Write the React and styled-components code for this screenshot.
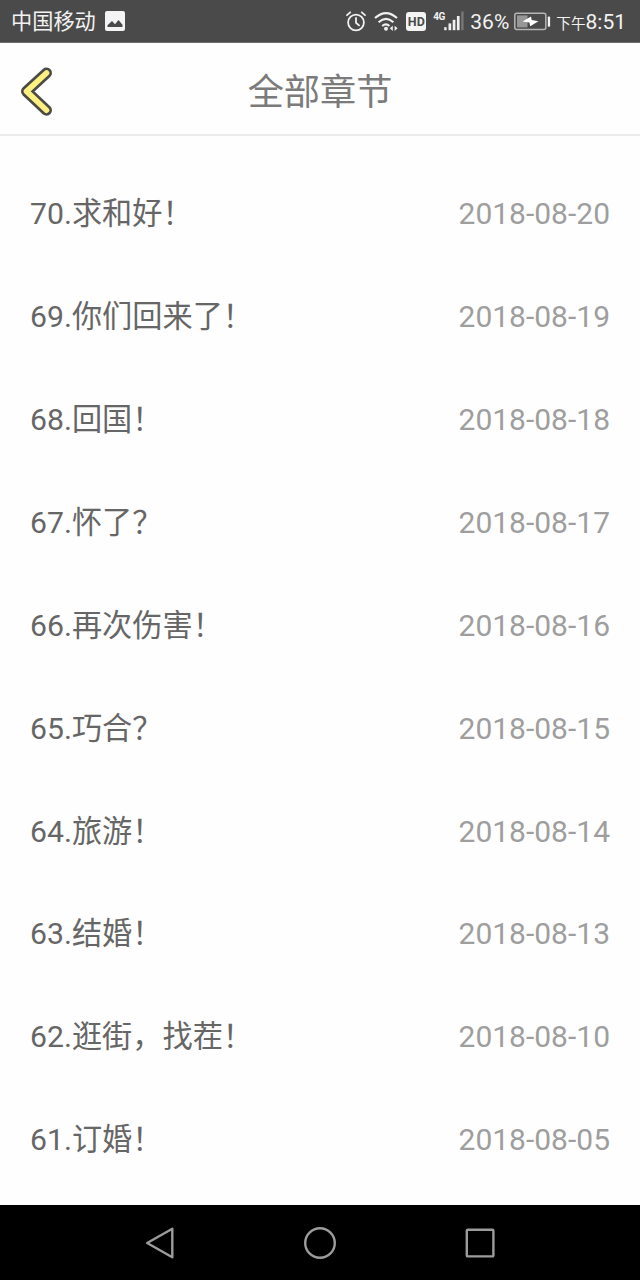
import React from 'react';
import styled, { createGlobalStyle } from 'styled-components';

const GlobalStyle = createGlobalStyle`
    body {
      margin: 0;
      background: #fefefe;
      font-family: Roboto, "Noto Sans CJK SC", sans-serif;
    }
`;

const Screen = styled.div`
    width: 640px;
    height: 1280px;
    display: flex;
    flex-direction: column;
    overflow: hidden;
    background: #fefefe;
`;

const StatusBar = styled.div`
    box-sizing: border-box;
    height: 43px;
    flex: none;
    display: flex;
    align-items: center;
    padding: 0 14px 0 11px;
    border-bottom: 1px solid #6c6c6c;
    background: #4a4a4a;
    color: #f2f2f2;
    white-space: nowrap;
    svg {
      display: block;
      flex: none;
    }
`;

const StatusText = styled.span`
    font-size: ${props => props.$size}px;
    line-height: 38px;
    margin-left: ${props => props.$gap || 0}px;
    padding-top: ${props => props.$drop || 2}px;
`;

const StatusIcon = styled.svg`
    margin-left: ${props => props.$gap || 0}px;
`;

const Spacer = styled.div`
    flex: 1;
`;

const HdBadge = styled.span`
    width: 20px;
    height: 19px;
    margin-left: 8px;
    border-radius: 3px;
    background: #f4f4f4;
    color: #4a4a4a;
    font-size: 12.5px;
    font-weight: 700;
    line-height: 20px;
    text-align: center;
`;

const NetworkType = styled.span`
    width: 11px;
    height: 20px;
    margin-left: 7px;
    font-size: 10px;
    font-weight: 700;
    line-height: 11px;
    letter-spacing: -0.6px;
`;

const Header = styled.div`
    box-sizing: border-box;
    height: 93px;
    flex: none;
    display: grid;
    grid-template-columns: 80px 1fr 80px;
    align-items: center;
    border-bottom: 2px solid #ececec;
`;

const BackButton = styled.button`
    width: 40px;
    height: 56px;
    margin: 4px 0 0 16px;
    padding: 0;
    border: 0;
    background: none;
    svg {
      display: block;
    }
`;

const Title = styled.h1`
    margin: 0;
    color: #7b7b7b;
    font-size: 36.2px;
    font-weight: 400;
    line-height: 52px;
    text-align: center;
    padding-top: 8px;
`;

const ChapterList = styled.ul`
    flex: 1;
    margin: 0;
    padding: 26.8px 30px 0;
    list-style: none;
`;

const ChapterRow = styled.li`
    height: 102.9px;
    display: flex;
    align-items: center;
    justify-content: space-between;
    line-height: 44px;
`;

const ChapterName = styled.span`
    color: #666;
    font-size: 30.2px;
`;

const ChapterDate = styled.span`
    color: #9e9e9e;
    font-size: 30px;
`;

const NavBar = styled.div`
    height: 75px;
    flex: none;
    display: grid;
    grid-template-columns: repeat(3, 160px);
    justify-content: center;
    justify-items: center;
    align-items: center;
    background: #000;
    svg {
      display: block;
      fill: none;
      stroke: #9c9c9c;
      stroke-width: 2.4;
      stroke-linejoin: round;
    }
`;

const chapters = [
  { name: '70.求和好！', date: '2018-08-20' },
  { name: '69.你们回来了！', date: '2018-08-19' },
  { name: '68.回国！', date: '2018-08-18' },
  { name: '67.怀了？', date: '2018-08-17' },
  { name: '66.再次伤害！', date: '2018-08-16' },
  { name: '65.巧合？', date: '2018-08-15' },
  { name: '64.旅游！', date: '2018-08-14' },
  { name: '63.结婚！', date: '2018-08-13' },
  { name: '62.逛街，找茬！', date: '2018-08-10' },
  { name: '61.订婚！', date: '2018-08-05' }
];

const PictureIcon = () => (
  <StatusIcon $gap={9} width="20" height="20" viewBox="0 0 20 20">
    <rect width="20" height="20" rx="2" fill="#f4f4f4" />
    <path d="M2.5 16V14.2L7 10l3 3.2 3.5-4.2 4 4.8V16z" fill="#4a4a4a" />
  </StatusIcon>
);

const AlarmIcon = () => (
  <StatusIcon width="20" height="21" viewBox="0 0 20 21" fill="none" stroke="#f0f0f0" strokeWidth="1.8" strokeLinecap="round">
    <circle cx="10" cy="11.5" r="7.9" />
    <path d="M1 4.2L4.2 1.3M19 4.2L15.8 1.3M10 7v4.8l3 2.6" />
  </StatusIcon>
);

const WifiIcon = () => (
  <StatusIcon $gap={8} width="24" height="21" viewBox="0 0 24 21" fill="none" stroke="#f0f0f0" strokeWidth="2.1">
    <path d="M1 7.1Q12 -3 23 7.1M4.6 11.2Q12 4.7 19.4 11.2M8.2 15Q12 11.7 15.4 15" />
    <circle cx="12" cy="17.8" r="2" fill="#f0f0f0" stroke="none" />
    <path d="M18.8 14.7v5.2l-3-2.6zM20.6 14.7v5.2l3-2.6z" fill="#f0f0f0" stroke="none" />
  </StatusIcon>
);

const SignalIcon = () => (
  <StatusIcon width="20" height="20" viewBox="0 0 20 20" fill="#f0f0f0">
    <rect x="0.2" y="16.2" width="2.4" height="3" />
    <rect x="4.5" y="12.4" width="2.7" height="6.8" />
    <rect x="8.7" y="8.8" width="2.7" height="10.4" />
    <rect x="12.9" y="5" width="2.7" height="14.2" />
    <rect x="17.2" y="0.5" width="2.4" height="18.7" fill="#777" />
  </StatusIcon>
);

const BatteryIcon = () => (
  <StatusIcon $gap={5} width="37" height="19" viewBox="0 0 37 19">
    <rect x="0.8" y="1.2" width="31" height="16.4" rx="2" fill="none" stroke="#b5b5b5" strokeWidth="1.5" />
    <rect x="3" y="3.4" width="10.5" height="12" fill="#979797" />
    <path d="M8.5 9.5L17 4.6l.7 3.5 6.8 1.2-8.3 4.9-.8-3.8z" fill="#fff" />
    <rect x="33.8" y="4.4" width="2.3" height="10.4" rx="0.8" fill="#f4f4f4" />
  </StatusIcon>
);

const Status = () => (
  <StatusBar>
    <StatusText $size={21.2}>中国移动</StatusText>
    <PictureIcon />
    <Spacer />
    <AlarmIcon />
    <WifiIcon />
    <HdBadge>HD</HdBadge>
    <NetworkType>4G</NetworkType>
    <SignalIcon />
    <StatusText $size={21} $gap={6}>36%</StatusText>
    <BatteryIcon />
    <StatusText $size={14.6} $gap={5} $drop={5}>下午</StatusText>
    <StatusText $size={21}>8:51</StatusText>
  </StatusBar>
);

const App = () => (
  <Screen>
    <GlobalStyle />
    <Status />
    <Header>
      <BackButton aria-label="返回">
        <svg width="40" height="56" viewBox="0 0 40 56" fill="none" strokeLinecap="round" strokeLinejoin="round">
          <path d="M30.5 10L10.5 28.4L30.5 47.2" stroke="#4b4b46" strokeWidth="11" />
          <path d="M30.5 10L10.5 28.4L30.5 47.2" stroke="#fbf080" strokeWidth="5.6" />
        </svg>
      </BackButton>
      <Title>全部章节</Title>
    </Header>
    <ChapterList>
      {chapters.map(chapter => (
        <ChapterRow key={chapter.name}>
          <ChapterName>{chapter.name}</ChapterName>
          <ChapterDate>{chapter.date}</ChapterDate>
        </ChapterRow>
      ))}
    </ChapterList>
    <NavBar>
      <svg width="34" height="34" viewBox="0 0 34 34">
        <path d="M4.2 17L29.3 2.8V31.2z" />
      </svg>
      <svg width="34" height="34" viewBox="0 0 34 34">
        <circle cx="17" cy="17" r="14.8" />
      </svg>
      <svg width="34" height="34" viewBox="0 0 34 34">
        <rect x="3.8" y="3.8" width="26.6" height="26.6" rx="1" />
      </svg>
    </NavBar>
  </Screen>
);

export default App;
